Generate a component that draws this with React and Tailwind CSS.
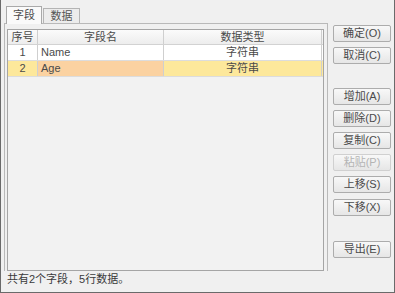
import React from "react";

const font = { fontFamily: '"Liberation Sans", "Noto Sans CJK SC", sans-serif' };

const buttons = [
  { label: "确定(O)", mt: "mt-[2px]" },
  { label: "取消(C)", mt: "mt-[5px]" },
  { label: "增加(A)", mt: "mt-[24px]" },
  { label: "删除(D)", mt: "mt-[5px]" },
  { label: "复制(C)", mt: "mt-[5px]" },
  { label: "粘贴(P)", mt: "mt-[5px]", disabled: true },
  { label: "上移(S)", mt: "mt-[5px]" },
  { label: "下移(X)", mt: "mt-[6px]" },
  { label: "导出(E)", mt: "mt-[25px]" },
];

const rows = [
  { no: 1, name: "Name", type: "字符串" },
  { no: 2, name: "Age", type: "字符串", selected: true },
];

const Btn = ({ label, mt, disabled }) => (
  <div
    className={`${mt} h-[17px] w-[58px] flex items-center justify-center border border-[#acacac] rounded-[2px] bg-gradient-to-b from-[#f8f8f8] to-[#e6e6e6] text-[11px] leading-none ${
      disabled ? "text-[#b4b4b4] border-[#d0d0d0]" : "text-[#4a4a4a]"
    }`}
  >
    {label}
  </div>
);

export default function App() {
  return (
    <div
      style={font}
      className="w-[395px] h-[293px] bg-[#f0f0f0] border-l border-r border-b border-[#6a6a6a] flex flex-col text-[#4a4a4a]"
    >
      <div className="flex flex-1">
        <div className="w-[328px] flex flex-col pl-[3px] pt-[6px]">
          <div className="flex items-end h-[17px] pl-[2px]">
            <div className="h-[18px] w-[36px] -mb-px z-10 bg-[#fafafa] border border-b-0 border-[#a9a9a9] flex items-center justify-center text-[11px]">
              字段
            </div>
            <div className="h-[15px] w-[37px] ml-px bg-[#ececec] border border-b-0 border-[#b4b4b4] flex items-center justify-center text-[11px] text-[#555]">
              数据
            </div>
          </div>
          <div className="w-[324px] h-[248px] border border-b-0 border-[#b9b9b9] pl-[2px] pt-[5px]">
            <div className="w-[317px] h-[242px] border border-[#a5a5a5] bg-[#f2f2f2] flex flex-col text-[11px]">
              <div className="flex h-[15px] bg-gradient-to-b from-[#fbfbfb] to-[#ededed] border-b border-[#d2d2d2] leading-[15px]">
                <div className="w-[30px] text-center border-r border-[#cfcfcf]">序号</div>
                <div className="w-[126px] text-center border-r border-[#cfcfcf]">字段名</div>
                <div className="w-[158px] text-center border-r border-[#cfcfcf]">数据类型</div>
              </div>
              {rows.map((r) => (
                <div
                  key={r.no}
                  className={`flex h-[16px] leading-[15px] border-b border-[#dcdcdc] ${
                    r.selected ? "bg-[#fde89b]" : "bg-white"
                  }`}
                >
                  <div className="w-[30px] text-center border-r border-[#cfcfcf]">{r.no}</div>
                  <div
                    className={`w-[126px] pl-[3px] border-r border-[#cfcfcf] ${
                      r.selected ? "bg-[#fbd2a1]" : ""
                    }`}
                  >
                    {r.name}
                  </div>
                  <div className="w-[158px] text-center border-r border-[#cfcfcf]">{r.type}</div>
                </div>
              ))}
            </div>
          </div>
        </div>
        <div className="flex flex-col pt-[23px] pl-[4px]">
          {buttons.map((b) => (
            <Btn key={b.label} {...b} />
          ))}
        </div>
      </div>
      <div className="h-[23px] pl-[6px] pb-[6px] flex items-center text-[11px] text-[#3a3a3a]">
        共有2个字段，5行数据。
      </div>
    </div>
  );
}
